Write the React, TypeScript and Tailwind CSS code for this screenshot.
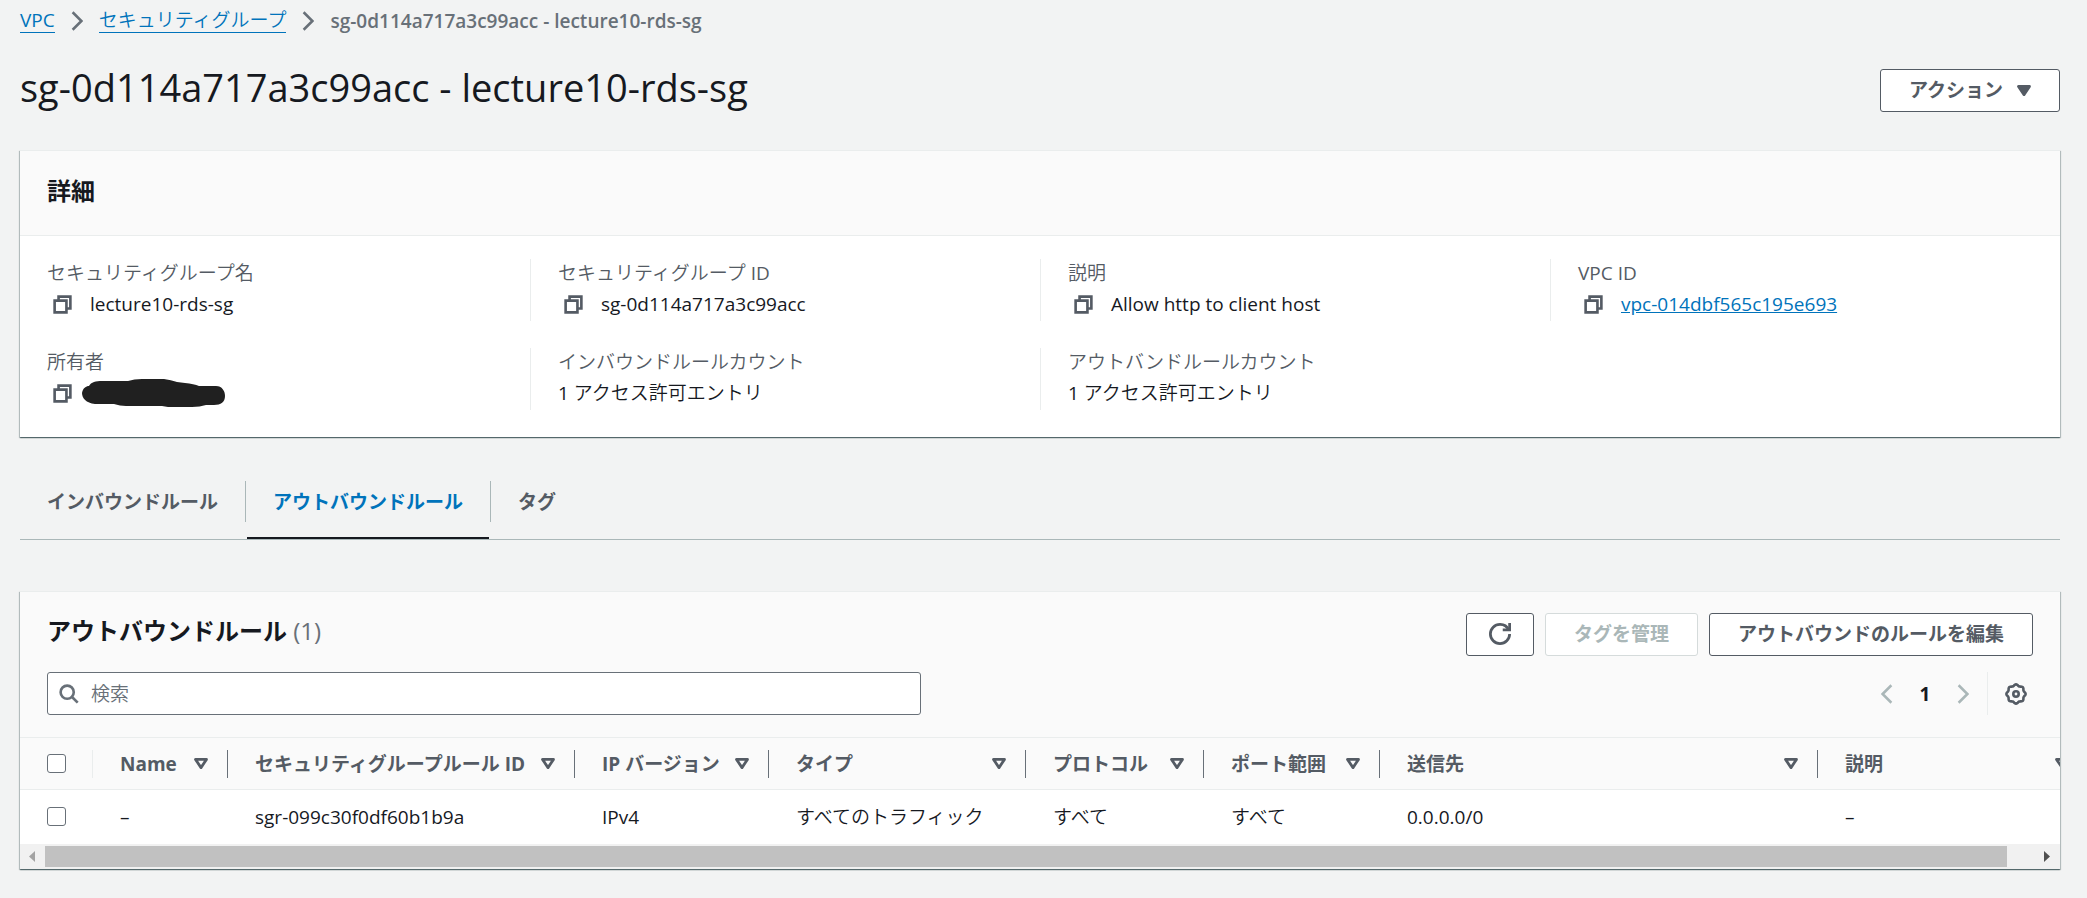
import type { ReactNode } from "react";

const LIGHT_TEXT = "font-['Open_Sans','Noto_Sans_CJK_JP_DemiLight','Noto_Sans_CJK_JP',sans-serif]";

function ChevronIcon({ className }: { className: string }) {
  return (
    <svg viewBox="3 0 9 16" className={className} fill="none" stroke="currentColor" strokeWidth="2" aria-hidden="true">
      <path d="m4 1 7 7-7 7" />
    </svg>
  );
}

function CaretIcon({ filled = false }: { filled?: boolean }) {
  return (
    <svg
      viewBox="3 4 10 8"
      className="h-[11px] w-3.5 shrink-0"
      fill={filled ? "currentColor" : "none"}
      stroke="currentColor"
      strokeWidth="2"
      strokeLinejoin="round"
      aria-hidden="true"
    >
      <path d="M4 5h8l-4 6z" />
    </svg>
  );
}

function CopyIcon() {
  return (
    <svg viewBox="0 0 16 16" className="size-[21px]" fill="none" stroke="currentColor" strokeWidth="2" aria-hidden="true">
      <path d="M2 5h9v9H2z" />
      <path d="M5 5V2h9v9h-3" />
    </svg>
  );
}

function RefreshIcon() {
  return (
    <svg viewBox="0 0 16 16" className="size-[22px]" fill="none" stroke="currentColor" strokeWidth="2" aria-hidden="true">
      <path d="M10 5h5V0" />
      <path d="M15 8a7 7 0 0 1-14 0 7 7 0 0 1 7-7 6.87 6.87 0 0 1 6.3 4" />
    </svg>
  );
}

function SearchIcon() {
  return (
    <svg viewBox="0 0 16 16" className="size-[21px] shrink-0 text-[#687078]" fill="none" stroke="currentColor" strokeWidth="2" aria-hidden="true">
      <circle cx="7" cy="7" r="5" />
      <path d="m15 15-4.5-4.5" />
    </svg>
  );
}

const GEAR_OUTLINE =
  Array.from({ length: 96 }, (_, i) => {
    const angle = (i / 96) * Math.PI * 2;
    const radius = 8.9 + 0.7 * Math.cos(8 * angle);
    const x = 11 + radius * Math.cos(angle);
    const y = 11 + radius * Math.sin(angle);
    return `${i === 0 ? "M" : "L"}${x.toFixed(2)} ${y.toFixed(2)}`;
  }).join("") + "Z";

function GearIcon() {
  return (
    <svg viewBox="0 0 22 22" className="size-[22px]" fill="none" stroke="currentColor" strokeWidth="2.6" aria-hidden="true">
      <path d={GEAR_OUTLINE} />
      <circle cx="11" cy="11" r="2.7" />
    </svg>
  );
}

function Redaction() {
  return (
    <svg viewBox="0 0 144 28" className="h-7 w-36" role="img" aria-label="非表示">
      <path
        d="M13 25C4 24 0 19 0 14 1 9 4 7 7 7 9 3 14 2 20 2L46 2Q52 0 60 0L82 0Q89 1 95 3L103 4Q112 5 117 7L134 7C140 7 143 12 143 17 143 23 139 26 132 26L124 26Q118 28 110 28L86 28 80 27 44 27Q38 27 32 25Z"
        fill="#202020"
      />
    </svg>
  );
}

function Button({ children, disabled = false, label }: { children: ReactNode; disabled?: boolean; label?: string }) {
  return (
    <button
      type="button"
      disabled={disabled}
      aria-label={label}
      className="flex h-[43px] items-center justify-center gap-3.5 rounded-[3px] border border-[#545b64] bg-white px-7 pb-px font-bold text-[#545b64] disabled:border-[#d5dbdb] disabled:text-[#aab7b8]"
    >
      {children}
    </button>
  );
}

function Panel({ children, className = "" }: { children: ReactNode; className?: string }) {
  return (
    <section
      className={`border-t border-[#eaeded] bg-white shadow-[0_1px_1px_0_rgba(0,28,36,0.45),1px_1px_1px_0_rgba(0,28,36,0.2),-1px_1px_1px_0_rgba(0,28,36,0.2)] ${className}`}
    >
      {children}
    </section>
  );
}

function Field({ label, divider = true, copy = false, children }: { label: string; divider?: boolean; copy?: boolean; children: ReactNode }) {
  return (
    <div className={divider ? "border-l border-[#eaeded] pl-[27px]" : "pl-[27px]"}>
      <dt className="leading-7 text-[#545b64]">{label}</dt>
      <dd className="flex h-[34px] items-center">
        {copy && (
          <button type="button" aria-label={`${label}をコピー`} className="ml-[5px] w-[38px] text-[#545b64]">
            <CopyIcon />
          </button>
        )}
        {children}
      </dd>
    </div>
  );
}

const columns = [
  { title: "Name", value: "–" },
  { title: "セキュリティグループルール ID", value: "sgr-099c30f0df60b1b9a" },
  { title: "IP バージョン", value: "IPv4" },
  { title: "タイプ", value: "すべてのトラフィック" },
  { title: "プロトコル", value: "すべて" },
  { title: "ポート範囲", value: "すべて" },
  { title: "送信先", value: "0.0.0.0/0" },
  { title: "説明", value: "–" },
];

function Checkbox({ label }: { label: string }) {
  return (
    <input
      type="checkbox"
      aria-label={label}
      className="block size-[19px] appearance-none rounded-[3px] border border-[#687078] bg-white checked:bg-[#0073bb]"
    />
  );
}

export default function App() {
  return (
    <div className="min-h-screen bg-[#f2f3f3] pt-2 pr-[27px] pb-7 pl-5 font-['Open_Sans','Noto_Sans_CJK_JP',sans-serif] text-[19px] leading-6 text-[#16191f]">
      <nav aria-label="パンくずリスト">
        <ol className="flex items-center text-[#687078]">
          <li>
            <a href="#vpc" className="block border-b border-[#0073bb] text-[#0073bb]">
              VPC
            </a>
          </li>
          <ChevronIcon className="mx-4 h-5 w-3" />
          <li className={LIGHT_TEXT}>
            <a href="#security-groups" className="block border-b border-[#0073bb] text-[#0073bb]">
              セキュリティグループ
            </a>
          </li>
          <ChevronIcon className="mx-4 h-5 w-3" />
          <li className="font-semibold" aria-current="page">
            sg-0d114a717a3c99acc - lecture10-rds-sg
          </li>
        </ol>
      </nav>

      <header className="mt-9 flex items-start justify-between">
        <h1 className="text-[38px] leading-9">sg-0d114a717a3c99acc - lecture10-rds-sg</h1>
        <Button>
          アクション
          <CaretIcon filled />
        </Button>
      </header>

      <Panel className="mt-[38px]">
        <div className="border-b border-[#eaeded] bg-[#fafafa] px-[27px] pt-6 pb-7">
          <h2 className="text-2xl font-bold">詳細</h2>
        </div>
        <dl className={`grid grid-cols-4 gap-y-[27px] pt-[23px] pb-[27px] ${LIGHT_TEXT}`}>
          <Field label="セキュリティグループ名" divider={false} copy>
            lecture10-rds-sg
          </Field>
          <Field label="セキュリティグループ ID" copy>
            sg-0d114a717a3c99acc
          </Field>
          <Field label="説明" copy>
            Allow http to client host
          </Field>
          <Field label="VPC ID" copy>
            <a href="#vpc-014dbf565c195e693" className="text-[#0073bb] underline">
              vpc-014dbf565c195e693
            </a>
          </Field>
          <Field label="所有者" divider={false} copy>
            <span className="-ml-2">
              <Redaction />
            </span>
          </Field>
          <Field label="インバウンドルールカウント">1 アクセス許可エントリ</Field>
          <Field label="アウトバンドルールカウント">1 アクセス許可エントリ</Field>
        </dl>
      </Panel>

      <div role="tablist" className="mt-11 flex border-b border-[#aab7b8] font-bold text-[#545b64]">
        <button type="button" role="tab" className="h-[41px] border-r border-[#aab7b8] px-[27px]">
          インバウンドルール
        </button>
        <button type="button" role="tab" aria-selected="true" className="mx-px h-[58px] border-b-2 border-[#16191f] px-[26px] pb-[15px] text-[#0073bb]">
          アウトバウンドルール
        </button>
        <button type="button" role="tab" className="h-[41px] border-l border-[#aab7b8] px-[27px]">
          タグ
        </button>
      </div>

      <Panel className="mt-[51px]">
        <div className="flex flex-col gap-4 bg-[#fafafa] px-[27px] pt-[21px] pb-[22px]">
          <div className="flex items-start justify-between">
            <h2 className="text-2xl leading-9 font-bold">
              アウトバウンドルール <span className="font-normal text-[#687078]">(1)</span>
            </h2>
            <div className="flex gap-[11px]">
              <Button label="更新">
                <div className="-mx-1.5">
                  <RefreshIcon />
                </div>
              </Button>
              <Button disabled>タグを管理</Button>
              <Button>アウトバウンドのルールを編集</Button>
            </div>
          </div>
          <div className="flex items-center justify-between">
            <label className={`flex h-[43px] w-[44%] items-center gap-3 rounded-[3px] border border-[#687078] bg-white px-2.5 ${LIGHT_TEXT}`}>
              <SearchIcon />
              <input type="search" aria-label="検索" placeholder="検索" className="min-w-0 flex-1 outline-none placeholder:text-[#687078]" />
            </label>
            <div className="flex h-[43px] items-center">
              <button type="button" disabled aria-label="前のページ" className="text-[#aab7b8]">
                <ChevronIcon className="h-5 w-3 rotate-180" />
              </button>
              <button type="button" aria-current="page" className="w-16 font-bold">
                1
              </button>
              <button type="button" disabled aria-label="次のページ" className="text-[#aab7b8]">
                <ChevronIcon className="h-5 w-3" />
              </button>
              <div className="ml-[18px] h-full border-l border-[#eaeded]" />
              <button type="button" aria-label="設定" className="mr-1.5 ml-[17px] text-[#545b64]">
                <GearIcon />
              </button>
            </div>
          </div>
        </div>

        <div className="overflow-hidden">
          <table className="w-[2068px] min-w-full table-fixed text-left">
            <colgroup>
              <col className="w-[73px]" />
              <col className="w-[135px]" />
              <col className="w-[347px]" />
              <col className="w-[194px]" />
              <col className="w-[257px]" />
              <col className="w-[178px]" />
              <col className="w-[176px]" />
              <col />
              <col className="w-[270px]" />
            </colgroup>
            <thead className="border-y border-[#eaeded] bg-[#fafafa] text-[#545b64]">
              <tr className="h-[52px]">
                <th className="p-0">
                  <div className="flex h-7 items-center border-r border-[#eaeded] pl-[27px]">
                    <Checkbox label="すべて選択" />
                  </div>
                </th>
                {columns.map((column, index) => (
                  <th key={column.title} className="p-0">
                    <div
                      className={`flex h-7 items-center justify-between pr-[19px] pl-[27px] whitespace-nowrap ${
                        index < columns.length - 1 ? "border-r border-[#687078]" : ""
                      }`}
                    >
                      {column.title}
                      <CaretIcon />
                    </div>
                  </th>
                ))}
              </tr>
            </thead>
            <tbody className={LIGHT_TEXT}>
              <tr className="h-[54px]">
                <td className="p-0 pl-[27px]">
                  <Checkbox label="sgr-099c30f0df60b1b9a を選択" />
                </td>
                {columns.map((column) => (
                  <td key={column.title} className="p-0 pl-[27px] whitespace-nowrap">
                    {column.value}
                  </td>
                ))}
              </tr>
            </tbody>
          </table>
        </div>

        <div className="flex h-[25px] items-center bg-[#f1f1f1] text-[#505050]" aria-hidden="true">
          <svg viewBox="0 0 25 25" className="size-[25px] shrink-0 text-[#a3a3a3]" fill="currentColor">
            <path d="M15 7v11l-6-5.500z" />
          </svg>
          <div className="h-[21px] flex-1 pr-7">
            <div className="h-full bg-[#c1c1c1]" />
          </div>
          <svg viewBox="0 0 25 25" className="size-[25px] shrink-0" fill="currentColor">
            <path d="M9 7v11l6-5.500z" />
          </svg>
        </div>
      </Panel>
    </div>
  );
}
